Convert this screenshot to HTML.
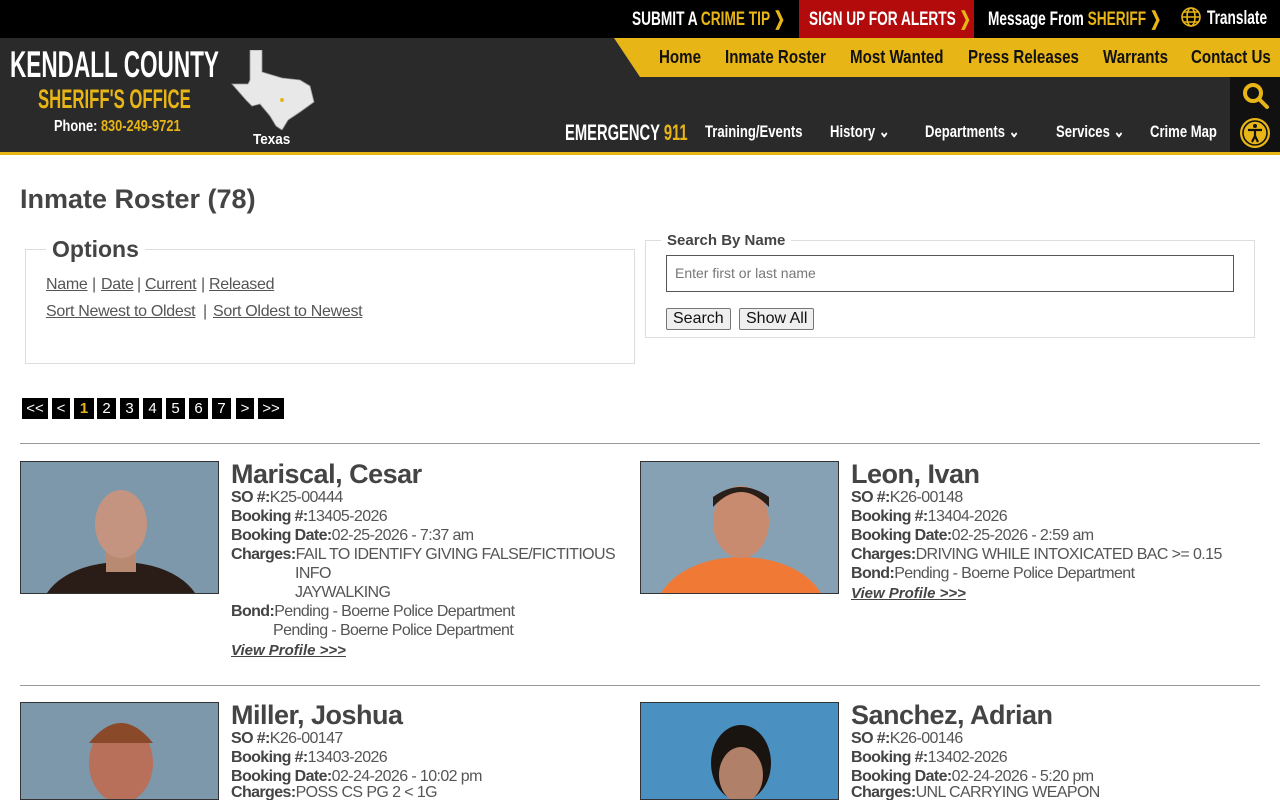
<!DOCTYPE html>
<html><head><meta charset="utf-8">
<style>
*{margin:0;padding:0;box-sizing:border-box}
html,body{width:1280px;height:800px;overflow:hidden}
body{background:#fff;font-family:"Liberation Sans",Arial,sans-serif;color:#444;position:relative}
.n{font-family:"Liberation Sans Narrow","Liberation Sans",sans-serif;font-weight:bold;transform-origin:0 0}
.a{position:absolute;white-space:nowrap}
.y{color:#e8b517}
#top{position:absolute;left:0;top:0;width:1280px;height:38px;background:#000}
#hdr{position:absolute;left:0;top:38px;width:1280px;height:114px;background:#2a2a2a}
#line{position:absolute;left:0;top:152px;width:1280px;height:3px;background:#e8b517}
.t{font-size:19px;color:#fff;top:8px;transform:scaleX(.72)}
.nav{font-size:18px;color:#111;top:47px;transform:scaleX(.84)}
.sub{font-size:17px;color:#fff;top:122px;transform:scaleX(.77)}
fieldset{position:absolute;border:1px solid #ddd}
legend{margin-left:20px;padding:0 6px}
.lk{font-size:16px;color:#555;text-decoration:underline;letter-spacing:-0.3px}
.pg{position:absolute;top:398px;height:21px;background:#000;color:#fff;font-size:15px;text-align:center;line-height:21px}
hr{position:absolute;left:20px;width:1240px;border:0;border-top:1px solid #999}
.ph{position:absolute;width:199px;height:133px;border:1px solid #333;background:#7d97ab;overflow:hidden}
.nm{font-size:27px;font-weight:bold;color:#444;letter-spacing:-0.5px}
.ln{font-size:16px;letter-spacing:-0.6px;color:#555}
.ln b{color:#444}
.vp{font-size:15px;font-weight:bold;font-style:italic;text-decoration:underline;color:#444}
button{font-family:inherit;font-size:16px;background:#efefef;border:1px solid #777;border-radius:2px;padding:1px 6px;color:#111}
</style></head><body>
<div id="top"></div>
<div class="a" style="left:799px;top:0;width:175px;height:38px;background:#b30b0b"></div>
<div class="a n t" style="left:632px">SUBMIT A <span class="y">CRIME TIP</span> <span class="y">&#x276F;</span></div>
<div class="a n t" style="left:809px">SIGN UP FOR ALERTS <span class="y">&#x276F;</span></div>
<div class="a n t" style="left:988px">Message From <span class="y">SHERIFF</span> <span class="y">&#x276F;</span></div>
<svg class="a" style="left:1179px;top:6px" width="24" height="24" viewBox="0 0 24 24" fill="none" stroke="#e8b517" stroke-width="1.6"><circle cx="12" cy="11" r="9"/><ellipse cx="12" cy="11" rx="4" ry="9"/><path d="M3 11h18M5 6h14M5 16h14"/></svg>
<div class="a n t" style="left:1207px">Translate</div>

<div id="hdr"></div>
<svg class="a" style="left:614px;top:38px" width="666" height="39"><polygon points="0,0 666,0 666,39 26,39" fill="#e8b517"/></svg>
<div class="a n nav" style="left:659px">Home</div>
<div class="a n nav" style="left:725px">Inmate Roster</div>
<div class="a n nav" style="left:850px">Most Wanted</div>
<div class="a n nav" style="left:968px">Press Releases</div>
<div class="a n nav" style="left:1103px">Warrants</div>
<div class="a n nav" style="left:1191px">Contact Us</div>
<div class="a" style="left:1230px;top:77px;width:50px;height:75px;background:#111"></div>
<svg class="a" style="left:1241px;top:81px" width="30" height="30" viewBox="0 0 30 30" fill="none" stroke="#e8b517" stroke-width="4"><circle cx="12" cy="12" r="8"/><path d="M18 18l8 8" stroke-linecap="round"/></svg>
<svg class="a" style="left:1239px;top:117px" width="32" height="32" viewBox="0 0 32 32"><circle cx="16" cy="16" r="15" fill="#e8b517"/><circle cx="16" cy="16" r="12" fill="none" stroke="#111" stroke-width="1.6"/><circle cx="16" cy="9" r="2" fill="#111"/><path d="M9 13h14M16 13v6M16 19l-3 6M16 19l3 6" stroke="#111" stroke-width="2.2" fill="none"/></svg>

<div class="a n" style="left:10px;top:44px;font-size:37px;color:#fff;transform:scaleX(.61)">KENDALL COUNTY</div>
<div class="a n y" style="left:38px;top:84px;font-size:27px;transform:scaleX(.62)">SHERIFF'S OFFICE</div>
<div class="a n" style="left:54px;top:118px;font-size:16px;color:#fff;transform:scaleX(.8)">Phone: <span class="y">830-249-9721</span></div>
<svg class="a" style="left:230px;top:50px" width="86" height="80" viewBox="0 0 86 80"><polygon points="20,0 32,0 32,22 52,28 70,30 80,36 84,52 70,62 58,70 52,80 46,76 40,66 30,54 22,56 16,50 2,34 18,34 20,30" fill="#e8e8e8" stroke="#999" stroke-width="0.8"/><circle cx="52" cy="50" r="2" fill="#e8b517"/></svg>
<div class="a n" style="left:253px;top:131px;font-size:15px;color:#fff;transform:scaleX(.9)">Texas</div>

<div class="a n" style="left:565px;top:120px;font-size:22px;color:#fff;transform:scaleX(.67)">EMERGENCY <span class="y">911</span></div>
<div class="a n sub" style="left:705px">Training/Events</div>
<div class="a n sub" style="left:830px">History &#x2304;</div>
<div class="a n sub" style="left:925px">Departments &#x2304;</div>
<div class="a n sub" style="left:1056px">Services &#x2304;</div>
<div class="a n sub" style="left:1150px">Crime Map</div>
<div id="line"></div>

<div class="a" style="left:20px;top:184px;font-size:27px;font-weight:bold">Inmate Roster (78)</div>

<fieldset style="left:25px;top:236px;width:610px;height:128px"><legend style="font-size:23px;font-weight:bold;color:#444">Options</legend></fieldset>
<div class="a lk" style="left:46px;top:276px">Name</div><div class="a" style="left:92px;top:276px;color:#555">|</div>
<div class="a lk" style="left:101px;top:276px">Date</div><div class="a" style="left:137px;top:276px;color:#555">|</div>
<div class="a lk" style="left:145px;top:276px">Current</div><div class="a" style="left:201px;top:276px;color:#555">|</div>
<div class="a lk" style="left:209px;top:276px">Released</div>
<div class="a lk" style="left:46px;top:303px">Sort Newest to Oldest</div><div class="a" style="left:203px;top:303px;color:#555">|</div>
<div class="a lk" style="left:213px;top:303px">Sort Oldest to Newest</div>

<fieldset style="left:645px;top:232px;width:610px;height:106px"><legend style="font-size:15px;font-weight:bold;color:#444;margin-left:15px">Search By Name</legend></fieldset>
<div class="a" style="left:666px;top:255px;width:568px;height:37px;border:1px solid #555;font-size:14px;color:#777;padding:9px 8px">Enter first or last name</div>
<button class="a" style="left:666px;top:308px">Search</button>
<button class="a" style="left:739px;top:308px">Show All</button>

<div class="pg" style="left:22px;width:26px">&lt;&lt;</div>
<div class="pg" style="left:52px;width:18px">&lt;</div>
<div class="pg" style="left:74px;width:20px;color:#e8b517;font-weight:bold">1</div>
<div class="pg" style="left:97px;width:19px">2</div>
<div class="pg" style="left:120px;width:19px">3</div>
<div class="pg" style="left:143px;width:19px">4</div>
<div class="pg" style="left:166px;width:19px">5</div>
<div class="pg" style="left:189px;width:19px">6</div>
<div class="pg" style="left:212px;width:19px">7</div>
<div class="pg" style="left:236px;width:18px">&gt;</div>
<div class="pg" style="left:258px;width:26px">&gt;&gt;</div>

<hr style="top:443px">
<div class="ph" style="left:20px;top:461px"><svg width="199" height="133"><ellipse cx="100" cy="150" rx="80" ry="50" fill="#2a1d18"/><rect x="85" y="80" width="30" height="30" fill="#b98a72"/><ellipse cx="100" cy="62" rx="26" ry="34" fill="#c49480"/></svg></div>
<div class="a nm" style="left:231px;top:459px">Mariscal, Cesar</div>
<div class="a ln" style="left:231px;top:489px"><b>SO #:</b>K25-00444</div>
<div class="a ln" style="left:231px;top:508px"><b>Booking #:</b>13405-2026</div>
<div class="a ln" style="left:231px;top:527px"><b>Booking Date:</b>02-25-2026 - 7:37 am</div>
<div class="a ln" style="left:231px;top:546px"><b>Charges:</b>FAIL TO IDENTIFY GIVING FALSE/FICTITIOUS</div>
<div class="a ln" style="left:295px;top:565px">INFO</div>
<div class="a ln" style="left:295px;top:584px">JAYWALKING</div>
<div class="a ln" style="left:231px;top:603px"><b>Bond:</b>Pending - Boerne Police Department</div>
<div class="a ln" style="left:273px;top:622px">Pending - Boerne Police Department</div>
<div class="a vp" style="left:231px;top:642px">View Profile &gt;&gt;&gt;</div>

<div class="ph" style="left:640px;top:461px;background:#87a1b4"><svg width="199" height="133"><ellipse cx="100" cy="150" rx="85" ry="55" fill="#f07a35"/><ellipse cx="100" cy="60" rx="28" ry="36" fill="#c98b6f"/><path d="M72 45q28-30 56 0v-10q-28-20-56 0z" fill="#2a1e18"/></svg></div>
<div class="a nm" style="left:851px;top:459px">Leon, Ivan</div>
<div class="a ln" style="left:851px;top:489px"><b>SO #:</b>K26-00148</div>
<div class="a ln" style="left:851px;top:508px"><b>Booking #:</b>13404-2026</div>
<div class="a ln" style="left:851px;top:527px"><b>Booking Date:</b>02-25-2026 - 2:59 am</div>
<div class="a ln" style="left:851px;top:546px"><b>Charges:</b>DRIVING WHILE INTOXICATED BAC &gt;= 0.15</div>
<div class="a ln" style="left:851px;top:565px"><b>Bond:</b>Pending - Boerne Police Department</div>
<div class="a vp" style="left:851px;top:585px">View Profile &gt;&gt;&gt;</div>

<hr style="top:685px">
<div class="ph" style="left:20px;top:702px;height:98px"><svg width="199" height="133"><ellipse cx="100" cy="150" rx="80" ry="40" fill="#d8b860"/><ellipse cx="100" cy="60" rx="32" ry="40" fill="#b8705a"/><path d="M68 40q32-40 64 0" fill="#8a4a2a"/></svg></div>
<div class="a nm" style="left:231px;top:700px">Miller, Joshua</div>
<div class="a ln" style="left:231px;top:730px"><b>SO #:</b>K26-00147</div>
<div class="a ln" style="left:231px;top:749px"><b>Booking #:</b>13403-2026</div>
<div class="a ln" style="left:231px;top:768px"><b>Booking Date:</b>02-24-2026 - 10:02 pm</div>
<div class="a ln" style="left:231px;top:784px;height:16px;overflow:hidden"><b>Charges:</b>POSS CS PG 2 &lt; 1G</div>

<div class="ph" style="left:640px;top:702px;height:98px;background:#4a90c0"><svg width="199" height="133"><ellipse cx="100" cy="60" rx="30" ry="38" fill="#1a1410"/><ellipse cx="100" cy="72" rx="22" ry="28" fill="#b08068"/></svg></div>
<div class="a nm" style="left:851px;top:700px">Sanchez, Adrian</div>
<div class="a ln" style="left:851px;top:730px"><b>SO #:</b>K26-00146</div>
<div class="a ln" style="left:851px;top:749px"><b>Booking #:</b>13402-2026</div>
<div class="a ln" style="left:851px;top:768px"><b>Booking Date:</b>02-24-2026 - 5:20 pm</div>
<div class="a ln" style="left:851px;top:784px;height:16px;overflow:hidden"><b>Charges:</b>UNL CARRYING WEAPON</div>
</body></html>
